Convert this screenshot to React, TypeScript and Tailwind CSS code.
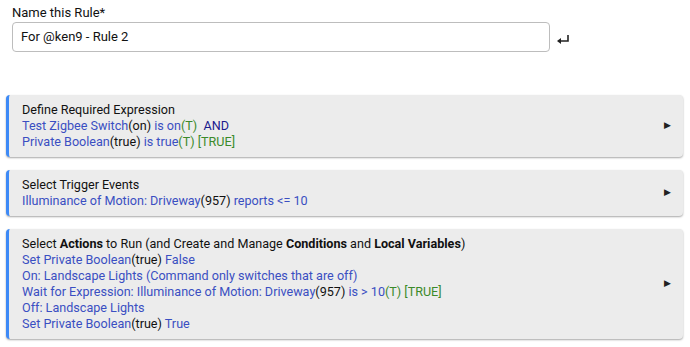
import React from "react";

const B = ({ children }: { children: React.ReactNode }) => (
  <span className="text-[#3a4fc2]">{children}</span>
);
const K = ({ children }: { children: React.ReactNode }) => (
  <span className="text-[#111]">{children}</span>
);
const G = ({ children }: { children: React.ReactNode }) => (
  <span className="text-[#3b8a2a]">{children}</span>
);

function Panel({ title, children }: { title: React.ReactNode; children: React.ReactNode }) {
  return (
    <div className="flex items-center rounded-[4px] border-l-[3px] border-[#3d8af7] bg-[#ececec] py-[7px] pl-[13px] pr-[12px] shadow-[0_1px_2px_rgba(0,0,0,0.35)]">
      <div className="flex-1 leading-[16px]">
        <div className="text-[#111]">{title}</div>
        {children}
      </div>
      <span className="text-[9px] text-[#222]">▶</span>
    </div>
  );
}

export default function App() {
  return (
    <div
      className="h-[347px] w-[690px] bg-white text-[12.6px]"
      style={{ fontFamily: "Roboto, 'Liberation Sans', sans-serif" }}
    >
      <div className="px-[12px] pt-[5px]">
        <div className="text-[13px] leading-[16px] text-[#111]">Name this Rule*</div>
        <div className="mt-[1px] flex items-center">
          <div className="flex h-[30px] w-[538px] items-center rounded-[4px] border border-[#bdbdbd] px-[8px] text-[13px] text-[#111]">
            For @ken9 - Rule 2
          </div>
          <svg width="14" height="11" viewBox="0 0 14 11" className="ml-[6px] mt-[4px]">
            <path d="M12 1 V7 H3" stroke="#222" strokeWidth="1.6" fill="none" />
            <path d="M1 7 L5 4 V10 Z" fill="#222" />
          </svg>
        </div>
      </div>

      <div className="mt-[43px] flex flex-col gap-[13px] pl-[6px] pr-[7px]">
        <Panel title="Define Required Expression">
          <div>
            <B>Test Zigbee Switch</B>
            <K>(on)</K>
            <B> is on</B>
            <G>(T)</G>
            <span className="text-[#1a1a8c]">{"\u00a0 "}AND</span>
          </div>
          <div>
            <B>Private Boolean</B>
            <K>(true)</K>
            <B> is true</B>
            <G>(T) [TRUE]</G>
          </div>
        </Panel>

        <Panel title="Select Trigger Events">
          <div>
            <B>Illuminance of Motion: Driveway</B>
            <K>(957)</K>
            <B> reports &lt;= 10</B>
          </div>
        </Panel>

        <Panel
          title={
            <>
              Select <b>Actions</b> to Run (and Create and Manage <b>Conditions</b> and{" "}
              <b>Local Variables</b>)
            </>
          }
        >
          <div>
            <B>Set Private Boolean</B>
            <K>(true)</K>
            <B> False</B>
          </div>
          <div>
            <B>On: Landscape Lights (Command only switches that are off)</B>
          </div>
          <div>
            <B>Wait for Expression: Illuminance of Motion: Driveway</B>
            <K>(957)</K>
            <B> is &gt; 10</B>
            <G>(T) [TRUE]</G>
          </div>
          <div>
            <B>Off: Landscape Lights</B>
          </div>
          <div>
            <B>Set Private Boolean</B>
            <K>(true)</K>
            <B> True</B>
          </div>
        </Panel>
      </div>
    </div>
  );
}
